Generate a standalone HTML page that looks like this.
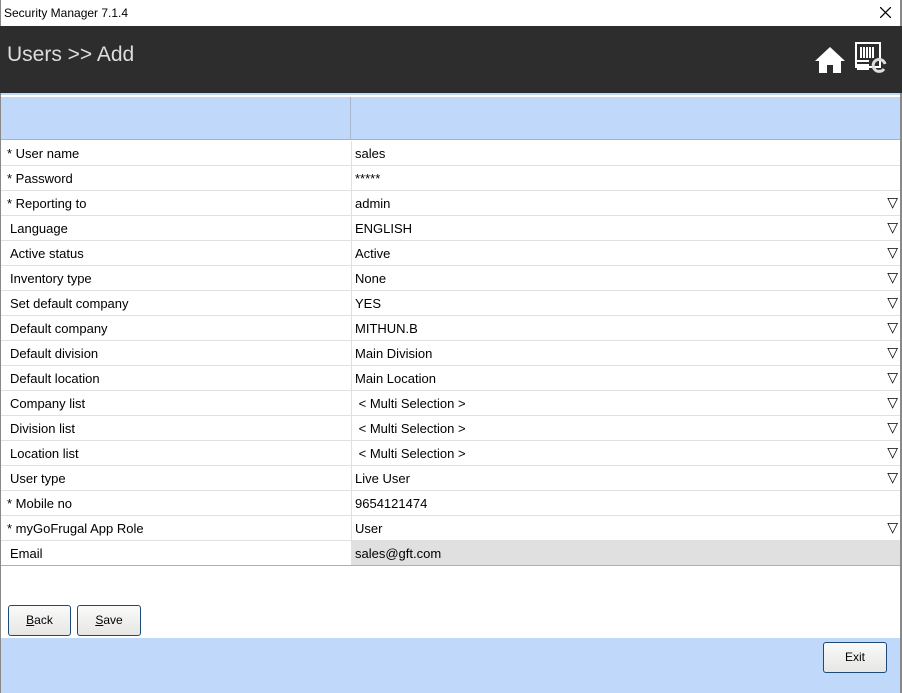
<!DOCTYPE html>
<html><head><style>
*{margin:0;padding:0;box-sizing:border-box}
body{width:902px;height:693px;position:relative;overflow:hidden;background:#fff;font-family:"Liberation Sans",Arial,sans-serif;font-size:13px;color:#000}
.a{position:absolute}
.row{position:absolute;left:1px;width:899px;height:25px;border-bottom:1px solid #e0e0e0}
.row .l{position:absolute;left:9px;top:5px}
.row .l.s{left:6px}
.row .v{position:absolute;left:350px;top:0;height:24px;width:549px;border-left:1px solid #e0e0e0;padding:5px 0 0 3px}
.row .d{position:absolute;right:2px;top:3px;font-size:14px}
.btn{position:absolute;border:1px solid #1e4a78;border-radius:3px;background:linear-gradient(#fafafa,#e6e6e4);font-size:12px;text-align:center;line-height:29px}
</style></head><body>
<div class="a" style="left:0;top:0;width:902px;height:693px;border-left:1px solid #888;border-right:2px solid #888"></div>
<div class="a" style="left:4px;top:6px;font-size:12px">Security Manager 7.1.4</div>
<svg class="a" style="left:880px;top:7px" width="11" height="11" viewBox="0 0 11 11"><path d="M0 0L11 11M11 0L0 11" stroke="#000" stroke-width="1.2"/></svg>
<div class="a" style="left:0;top:26px;width:902px;height:67px;background:#2d2d2d"></div>
<div class="a" style="left:7px;top:43px;font-size:21px;color:#ddd">Users &gt;&gt; Add</div>
<svg class="a" style="left:814px;top:46px" width="32" height="28" viewBox="0 0 32 28"><path d="M16 1 L31 15 L27 15 L27 27 L19 27 L19 19 L13 19 L13 27 L5 27 L5 15 L1 15 Z" fill="#fff"/></svg>
<svg class="a" style="left:855px;top:42px" width="34" height="32" viewBox="0 0 34 32"><rect x="1" y="1" width="24" height="24" fill="none" stroke="#fff" stroke-width="2"/><path d="M6 5v11M9 5v11M12 5v11M15 5v11M18 5v11" stroke="#fff" stroke-width="2"/><path d="M2 19h12M2 23h12M2 27h12" stroke="#fff" stroke-width="2"/><path d="M30 22a6 6 0 1 0 -1 5" fill="none" stroke="#ddd" stroke-width="3"/></svg>
<div class="a" style="left:1px;top:93px;width:899px;height:2px;background:#c0d8f8"></div>
<div class="a" style="left:1px;top:97px;width:899px;height:43px;background:#c0d8fa;border-bottom:1px solid #b0b0b0"></div>
<div class="a" style="left:350px;top:97px;width:1px;height:43px;background:#a8b8cc"></div>
<div class="row" style="top:141px"><span class="l s">* User name</span><span class="v">sales</span></div>
<div class="row" style="top:166px"><span class="l s">* Password</span><span class="v">*****</span></div>
<div class="row" style="top:191px"><span class="l s">* Reporting to</span><span class="v">admin<span class="d">▽</span></span></div>
<div class="row" style="top:216px"><span class="l">Language</span><span class="v">ENGLISH<span class="d">▽</span></span></div>
<div class="row" style="top:241px"><span class="l">Active status</span><span class="v">Active<span class="d">▽</span></span></div>
<div class="row" style="top:266px"><span class="l">Inventory type</span><span class="v">None<span class="d">▽</span></span></div>
<div class="row" style="top:291px"><span class="l">Set default company</span><span class="v">YES<span class="d">▽</span></span></div>
<div class="row" style="top:316px"><span class="l">Default company</span><span class="v">MITHUN.B<span class="d">▽</span></span></div>
<div class="row" style="top:341px"><span class="l">Default division</span><span class="v">Main Division<span class="d">▽</span></span></div>
<div class="row" style="top:366px"><span class="l">Default location</span><span class="v">Main Location<span class="d">▽</span></span></div>
<div class="row" style="top:391px"><span class="l">Company list</span><span class="v">&nbsp;&lt; Multi Selection &gt;<span class="d">▽</span></span></div>
<div class="row" style="top:416px"><span class="l">Division list</span><span class="v">&nbsp;&lt; Multi Selection &gt;<span class="d">▽</span></span></div>
<div class="row" style="top:441px"><span class="l">Location list</span><span class="v">&nbsp;&lt; Multi Selection &gt;<span class="d">▽</span></span></div>
<div class="row" style="top:466px"><span class="l">User type</span><span class="v">Live User<span class="d">▽</span></span></div>
<div class="row" style="top:491px"><span class="l s">* Mobile no</span><span class="v">9654121474</span></div>
<div class="row" style="top:516px"><span class="l s">* myGoFrugal App Role</span><span class="v">User<span class="d">▽</span></span></div>
<div class="row" style="top:541px;border-bottom:1px solid #b0b0b0"><span class="l">Email</span><span class="v" style="background:#e0e0e0;font-size:13px;padding-top:5px">sales@gft.com</span></div>
<div class="btn" style="left:8px;top:605px;width:63px;height:31px"><u>B</u>ack</div>
<div class="btn" style="left:77px;top:605px;width:64px;height:31px"><u>S</u>ave</div>
<div class="a" style="left:1px;top:638px;width:899px;height:55px;background:#c0d8fa"></div>
<div class="btn" style="left:823px;top:642px;width:64px;height:31px">Exit</div>
</body></html>
